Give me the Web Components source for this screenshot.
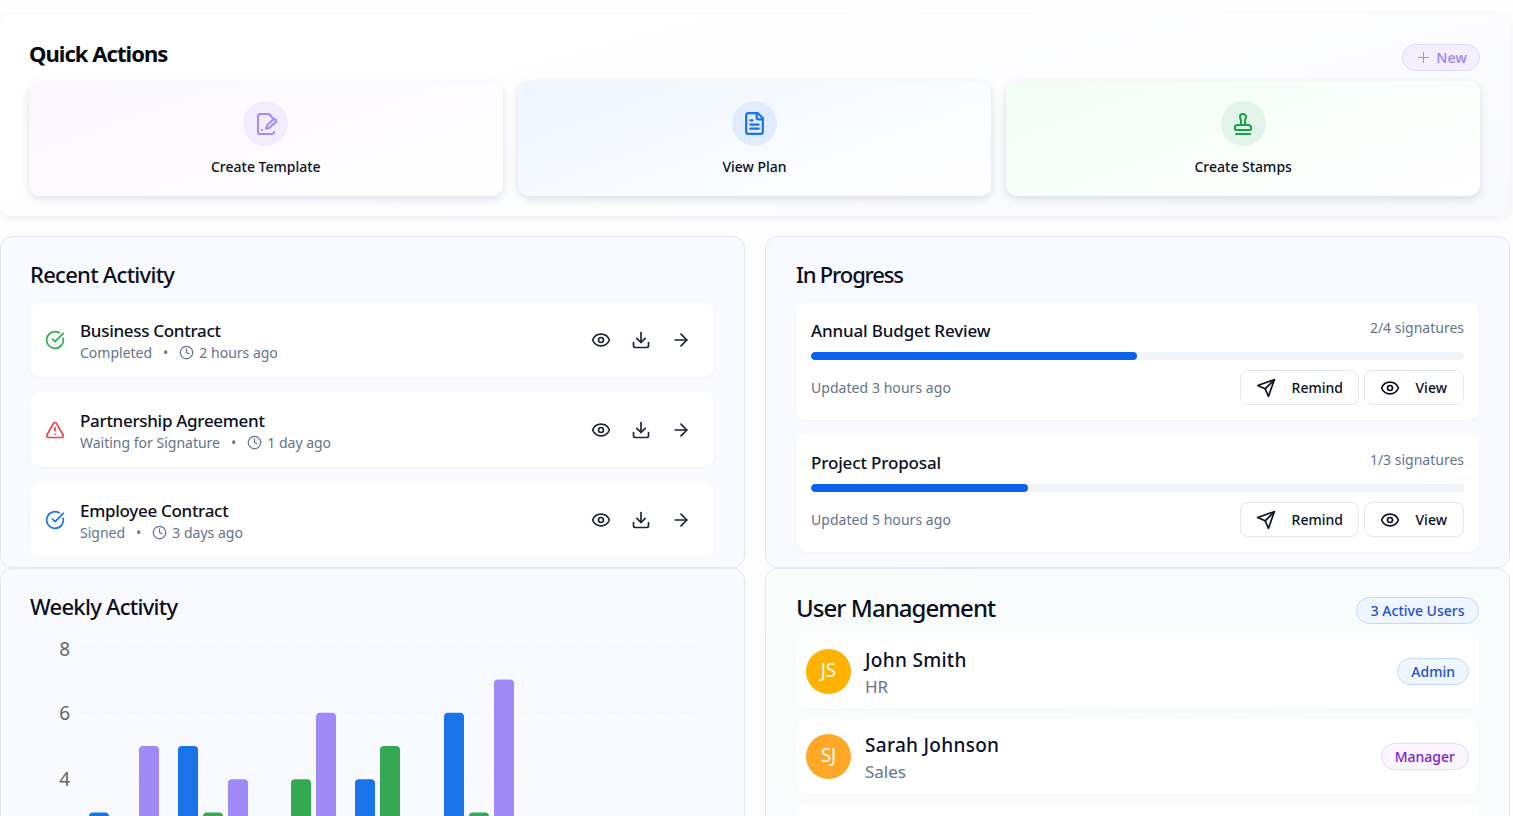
<!DOCTYPE html>
<html lang="en"><head><meta charset="utf-8"><title>Dashboard</title>
<style>
html,body{margin:0;padding:0;height:816px;overflow:hidden;background:#fefeff}
body{font-family:"Noto Sans",sans-serif;color:#0b0f1e}
</style></head><body>
<app-root></app-root>
<script>
const P={
 check:'<path d="M21.8 10A10 10 0 1 1 17 3.34"/><path d="m9 11 3 3L22 4"/>',
 alert:'<path d="m21.73 18-8-14a2 2 0 0 0-3.48 0l-8 14A2 2 0 0 0 4 21h16a2 2 0 0 0 1.73-3"/><path d="M12 9v4"/><path d="M12 17h.01"/>',
 clock:'<circle cx="12" cy="12" r="10"/><path d="M12 6v6l4 2"/>',
 eye:'<path d="M2.06 12.35a1 1 0 0 1 0-.7 10.75 10.75 0 0 1 19.88 0 1 1 0 0 1 0 .7 10.75 10.75 0 0 1-19.88 0"/><circle cx="12" cy="12" r="3"/>',
 download:'<path d="M21 15v4a2 2 0 0 1-2 2H5a2 2 0 0 1-2-2v-4"/><path d="m7 10 5 5 5-5"/><path d="M12 15V3"/>',
 arrow:'<path d="M5 12h14"/><path d="m12 5 7 7-7 7"/>',
 send:'<path d="m22 2-7 20-4-9-9-4Z"/><path d="M22 2 11 13"/>',
 plus:'<path d="M5 12h14"/><path d="M12 5v14"/>',
 stamp:'<path d="M5 22h14"/><path d="M19.27 13.73A2.5 2.5 0 0 0 17.5 13h-11A2.5 2.5 0 0 0 4 15.5V17a1 1 0 0 0 1 1h14a1 1 0 0 0 1-1v-1.5c0-.66-.26-1.3-.73-1.77Z"/><path d="M14 13V8.5C14 7 15 7 15 5a3 3 0 0 0-3-3c-1.66 0-3 1-3 3s1 2 1 3.5V13"/>',
 file:'<path d="M15 2H6a2 2 0 0 0-2 2v16a2 2 0 0 0 2 2h12a2 2 0 0 0 2-2V7Z"/><path d="M14 2v4a2 2 0 0 0 2 2h4"/><path d="M10 9H8"/><path d="M16 13H8"/><path d="M16 17H8"/>',
 sign:'<path d="M19.5 7.5V7L15 2H6a2 2 0 0 0-2 2v16a2 2 0 0 0 2 2h12a2 2 0 0 0 2-2"/><path d="M21.6 10.4a1.9 1.9 0 0 0-2.7-2.7l-5.8 5.8a2 2 0 0 0-.5.9l-.6 2.4 2.4-.6a2 2 0 0 0 .9-.5z"/><path d="M8 18h.01"/>'
};
class UiIcon extends HTMLElement{connectedCallback(){
 const s=this.getAttribute('size')||20,w=this.getAttribute('stroke')||2;
 this.attachShadow({mode:'open'}).innerHTML=`<style>:host{display:inline-flex;flex:none;width:${s}px;height:${s}px}svg{display:block}</style><svg width="${s}" height="${s}" viewBox="0 0 24 24" fill="none" stroke="currentColor" stroke-width="${w}" stroke-linecap="round" stroke-linejoin="round">${P[this.getAttribute('name')]}</svg>`;
}}
customElements.define('ui-icon',UiIcon);

class QuickAction extends HTMLElement{connectedCallback(){
 const c=this.getAttribute('color'),b=this.getAttribute('tint'),t=this.getAttribute('circle');
 this.attachShadow({mode:'open'}).innerHTML=`<style>
 :host{display:flex;flex-direction:column;align-items:center;height:115px;box-sizing:border-box;padding-top:20px;border-radius:12px;background:linear-gradient(160deg,${b},#fff 100%);box-shadow:0 3px 9px rgba(30,41,70,.14)}
 .c{width:45px;height:45px;border-radius:50%;background:${t};color:${c};display:flex;align-items:center;justify-content:center}
 .l{margin-top:10px;font-size:14px;font-weight:500;line-height:22px;color:#0b0f1e}
 </style><div class="c"><ui-icon name="${this.getAttribute('icon')}" size="${this.getAttribute('isize')||24}" stroke="2.1"></ui-icon></div><div class="l"><slot></slot></div>`;
}}
customElements.define('quick-action',QuickAction);

class ChipPill extends HTMLElement{connectedCallback(){
 const k=this.getAttribute('kind')||'blue';
 const m={blue:['#eff6ff','#bfdbfe','#1d4ed8'],purple:['#faf5ff','#e9d5ff','#7e22ce'],violet:['#f3effe','#e2dafc','#a78bfa']}[k];
 this.attachShadow({mode:'open'}).innerHTML=`<style>
 :host{display:inline-flex;align-items:center;height:27px;box-sizing:border-box;padding:0 13px;border-radius:14px;background:${m[0]};border:1px solid ${m[1]};color:${m[2]};font-size:14px;font-weight:500;white-space:nowrap;flex:none}
 </style><slot></slot>`;
}}
customElements.define('chip-pill',ChipPill);

class DashPanel extends HTMLElement{connectedCallback(){
 this.attachShadow({mode:'open'}).innerHTML=`<style>
 :host{display:block;box-sizing:border-box;border:1px solid #e1e8f2;border-radius:12px;padding:20px 30px 10px 29px;background:var(--bg,#f9faff)}
 :host(.right){padding-left:30px}
 header{display:flex;justify-content:space-between;align-items:center;height:37px;margin-bottom:8px}
 h2{margin:0;font-size:22px;font-weight:500;letter-spacing:-.72px;line-height:35px;padding-bottom:2px;color:#0b0f1e}
 :host(.ip) h2{letter-spacing:-1.15px}
 :host(.um) h2{font-size:24px;letter-spacing:-.95px;padding-bottom:0;line-height:37px}
 ::slotted([slot=aside]){margin-top:6px;padding:0 13.5px}
 .b{display:flex;flex-direction:column;gap:var(--gap,15px)}
 </style><header><h2>${this.getAttribute('title')}</h2><slot name="aside"></slot></header><div class="b"><slot></slot></div>`;
}}
customElements.define('dash-panel',DashPanel);

class ActivityItem extends HTMLElement{connectedCallback(){
 const a=n=>this.getAttribute(n);
 this.attachShadow({mode:'open'}).innerHTML=`<style>
 :host{display:flex;align-items:center;height:75px;box-sizing:border-box;padding:0 23px 0 15px;background:#fff;border-radius:10px;box-shadow:0 1px 3px rgba(30,41,70,.04)}
 .st{color:${a('color')};margin-right:15px}
 .m{flex:1;min-width:0;padding-top:4px}
 .t{font-size:17px;font-weight:500;line-height:22px;letter-spacing:-.3px;color:#0b0f1e}
 .s{display:flex;align-items:center;font-size:14px;line-height:22px;color:#64748b}
 .d{margin:0 11px;font-size:14px}
 .s ui-icon{margin-right:5px}
 .a{display:flex;gap:20px;color:#1a2233}
 </style><ui-icon class="st" name="${a('icon')}" size="20"></ui-icon>
 <div class="m"><div class="t">${a('title')}</div><div class="s"><span>${a('status')}</span><span class="d">•</span><ui-icon name="clock" size="15"></ui-icon><span>${a('time')}</span></div></div>
 <div class="a"><ui-icon name="eye" size="20"></ui-icon><ui-icon name="download" size="20"></ui-icon><ui-icon name="arrow" size="20"></ui-icon></div>`;
}}
customElements.define('activity-item',ActivityItem);

class GhostButton extends HTMLElement{connectedCallback(){
 this.attachShadow({mode:'open'}).innerHTML=`<style>
 :host{display:inline-flex;align-items:center;height:35px;box-sizing:border-box;padding:0 15px;gap:15.5px;border:1px solid #e2e8f0;border-radius:8px;background:#fff;font-size:14px;font-weight:500;color:#0b0f1e}
 :host([icon=eye]){min-width:100px}
 </style><ui-icon name="${this.getAttribute('icon')}" size="20"></ui-icon><slot></slot>`;
}}
customElements.define('ghost-button',GhostButton);

class ProgressItem extends HTMLElement{connectedCallback(){
 const a=n=>this.getAttribute(n);
 this.attachShadow({mode:'open'}).innerHTML=`<style>
 :host{display:block;box-sizing:border-box;padding:15px 15px 14.5px;background:#fff;border-radius:10px;box-shadow:0 1px 3px rgba(30,41,70,.04)}
 .r{display:flex;justify-content:space-between;align-items:flex-start}
 .t{font-size:17px;font-weight:500;line-height:27px;letter-spacing:-.15px;color:#0b0f1e}
 .n{font-size:14px;line-height:22px;color:#64748b}
 .bar{height:8px;border-radius:4px;background:#f1f5f9;margin:8px 0 10px;overflow:hidden}
 .bar i{display:block;height:100%;width:${a('pct')}%;background:#0d62ec;border-radius:4px}
 .f{display:flex;justify-content:space-between;align-items:center}
 .u{font-size:14px;color:#64748b;letter-spacing:.05px}
 .bs{display:flex;gap:5px}
 </style><div class="r"><div class="t">${a('title')}</div><div class="n">${a('sig')}</div></div>
 <div class="bar"><i></i></div>
 <div class="f"><div class="u">${a('updated')}</div><div class="bs"><ghost-button icon="send">Remind</ghost-button><ghost-button icon="eye">View</ghost-button></div></div>`;
}}
customElements.define('progress-item',ProgressItem);

class UserItem extends HTMLElement{connectedCallback(){
 const a=n=>this.getAttribute(n);
 const body=a('name')?`<div class="av"><span>${a('initials')}</span></div><div class="m"><div class="t">${a('name')}</div><div class="s">${a('dept')}</div></div><slot></slot>`:'';
 this.attachShadow({mode:'open'}).innerHTML=`<style>
 :host{display:flex;align-items:center;height:75px;flex:none;box-sizing:border-box;padding:0 10px;background:#fff;border-radius:10px;box-shadow:0 1px 3px rgba(30,41,70,.03)}
 .av{width:45px;height:45px;border-radius:50%;background:${a('color')};color:#fff;display:flex;align-items:center;justify-content:center;font-size:19px;margin-right:14px;flex:none}
 .av span{padding-bottom:3px}
 .m{flex:1;padding-top:2px}
 .t{font-size:19px;font-weight:500;line-height:28px;letter-spacing:.3px;color:#0b0f1e}
 .s{font-size:17px;line-height:26px;color:#64748b}
 </style>${body}`;
}}
customElements.define('user-item',UserItem);

class WeeklyChart extends HTMLElement{connectedCallback(){
 const y=v=>12.4+(8-v)*33.2;
 const bars=[[59,'b',3],[109,'p',5],[148,'b',5],[173,'g',3],[198,'p',4],[261,'g',4],[286,'p',6],[325,'b',4],[350,'g',5],[414,'b',6],[439,'g',3],[464,'p',7]];
 const col={b:'#1a73e8',g:'#34a853',p:'#a08af7'};
 const dy={8:10,6:7,4:7};
 const grid=[8,6,4].map(v=>`<line x1="50" x2="669" y1="${y(v)}" y2="${y(v)}" stroke="#f0f1f6" stroke-dasharray="3 3"/><text x="40" y="${y(v)+dy[v]}" text-anchor="end" font-size="19" fill="#666">${v}</text>`).join('');
 const rects=bars.map(([x,c,v])=>`<path d="M${x} 300V${y(v)+4}a4 4 0 0 1 4-4h12a4 4 0 0 1 4 4V300Z" fill="${col[c]}"/>`).join('');
 this.attachShadow({mode:'open'}).innerHTML=`<style>:host{display:block;height:300px}svg{display:block;font-family:"Noto Sans",sans-serif}</style><svg width="685" height="300" viewBox="0 0 685 300">${grid}${rects}</svg>`;
}}
customElements.define('weekly-chart',WeeklyChart);

class AppRoot extends HTMLElement{connectedCallback(){
 this.attachShadow({mode:'open'}).innerHTML=`<style>
 :host{display:block;width:1510px;padding-top:14px}
 .qa{height:202px;box-sizing:border-box;border-radius:12px;padding:20px 30px 0 29px;background:linear-gradient(165deg,#fff 30%,#f8f9fc);box-shadow:0 2px 8px rgba(30,41,70,.08);margin-bottom:20px}
 .qh{display:flex;justify-content:space-between;align-items:flex-start;height:47px}
 .qh h2{margin:0;font-size:22px;font-weight:700;letter-spacing:-.95px;line-height:38px;color:#05070f}
 .new{margin-top:10px;gap:4.5px;padding:0 12px 0 11.5px;font-weight:600}
 .cards{display:grid;grid-template-columns:repeat(3,1fr);gap:15px}
 .g{display:grid;grid-template-columns:745px 745px;column-gap:20px;grid-template-rows:332px 400px}
 .ip{--gap:14.6px}
 .um{--bg:linear-gradient(135deg,#f8fcfb,#f9fbfd);--gap:10px}
 </style>
 <section class="qa"><div class="qh"><h2>Quick Actions</h2><chip-pill class="new" kind="violet"><ui-icon name="plus" size="17" stroke="1.5"></ui-icon>New</chip-pill></div>
 <div class="cards">
 <quick-action icon="sign" color="#a78bfa" tint="#fbf6ff" circle="#f1edfe">Create Template</quick-action>
 <quick-action icon="file" isize="25" color="#1a73e8" tint="#f0f6ff" circle="#e0ecfd">View Plan</quick-action>
 <quick-action icon="stamp" color="#16a34a" tint="#f2fdf4" circle="#e1f4e7">Create Stamps</quick-action>
 </div></section>
 <div class="g">
 <dash-panel title="Recent Activity">
 <activity-item icon="check" color="#34a853" title="Business Contract" status="Completed" time="2 hours ago"></activity-item>
 <activity-item icon="alert" color="#ef4444" title="Partnership Agreement" status="Waiting for Signature" time="1 day ago"></activity-item>
 <activity-item icon="check" color="#1a73e8" title="Employee Contract" status="Signed" time="3 days ago"></activity-item>
 </dash-panel>
 <dash-panel class="right ip" title="In Progress">
 <progress-item title="Annual Budget Review" sig="2/4 signatures" pct="49.9" updated="Updated 3 hours ago"></progress-item>
 <progress-item title="Project Proposal" sig="1/3 signatures" pct="33.3" updated="Updated 5 hours ago"></progress-item>
 </dash-panel>
 <dash-panel title="Weekly Activity"><weekly-chart></weekly-chart></dash-panel>
 <dash-panel class="right um" title="User Management"><chip-pill slot="aside">3 Active Users</chip-pill>
 <user-item color="#ffb300" initials="JS" name="John Smith" dept="HR"><chip-pill>Admin</chip-pill></user-item>
 <user-item color="#ffa726" initials="SJ" name="Sarah Johnson" dept="Sales"><chip-pill kind="purple">Manager</chip-pill></user-item>
 <user-item></user-item>
 </dash-panel>
 </div>`;
}}
customElements.define('app-root',AppRoot);
</script></body></html>
